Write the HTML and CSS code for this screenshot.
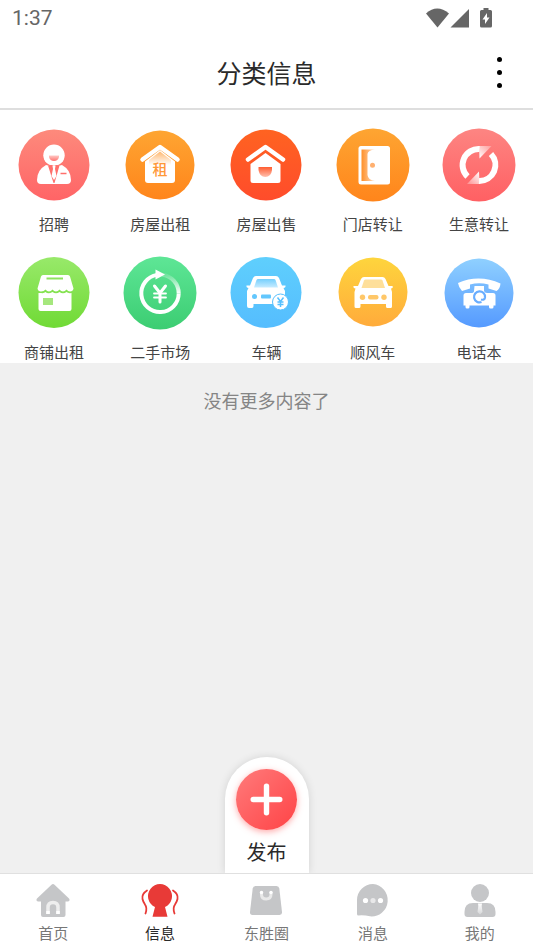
FILE: index.html
```html
<!DOCTYPE html>
<html lang="zh-CN">
<head>
<meta charset="utf-8">
<meta name="viewport" content="width=device-width, initial-scale=1">
<title>分类信息</title>
<link rel="stylesheet" href="styles.css">
</head>
<body>
<svg class="defs" aria-hidden="true">
  <defs>
    <linearGradient id="pink" x2="0" y2="1"><stop stop-color="#fd8a7c"/><stop offset="1" stop-color="#ff6466"/></linearGradient>
    <linearGradient id="rose" x2="0" y2="1"><stop stop-color="#fd8582"/><stop offset="1" stop-color="#ff6063"/></linearGradient>
    <linearGradient id="orange" x2="0" y2="1"><stop stop-color="#fea532"/><stop offset="1" stop-color="#ff851b"/></linearGradient>
    <linearGradient id="red" x2="0" y2="1"><stop stop-color="#ff6321"/><stop offset="1" stop-color="#ff4c2b"/></linearGradient>
    <linearGradient id="lime" x2="0" y2="1"><stop stop-color="#98e96a"/><stop offset="1" stop-color="#70da35"/></linearGradient>
    <linearGradient id="green" x2="0" y2="1"><stop stop-color="#5ee696"/><stop offset="1" stop-color="#3ccd72"/></linearGradient>
    <linearGradient id="sky" x2="0" y2="1"><stop stop-color="#5fcffd"/><stop offset="1" stop-color="#55bdfe"/></linearGradient>
    <linearGradient id="yellow" x2="0" y2="1"><stop stop-color="#fed53d"/><stop offset="1" stop-color="#ffab3b"/></linearGradient>
    <linearGradient id="blue" x2="0" y2="1"><stop stop-color="#8fd0ff"/><stop offset="1" stop-color="#559aff"/></linearGradient>
    <linearGradient id="door" x2="1" y2="0"><stop stop-color="#ff9028"/><stop offset="1" stop-color="#ffe0c8"/></linearGradient>
    <linearGradient id="mouth" x2="0" y2="1"><stop stop-color="#ff5c30"/><stop offset="1" stop-color="#ffc0ae"/></linearGradient>
    <linearGradient id="smile" x2="0" y2="1"><stop stop-color="#ffc9c5"/><stop offset="1" stop-color="#ff7370"/></linearGradient>
    <linearGradient id="attic" x2="0" y2="1"><stop stop-color="#ffb870"/><stop offset="1" stop-color="#fff"/></linearGradient>
    <linearGradient id="tipUp" x1="1" y1="0" x2="0" y2="1"><stop stop-color="#fff" stop-opacity=".25"/><stop offset="1" stop-color="#fff"/></linearGradient>
    <linearGradient id="tipDown" x1="0" y1="1" x2="1" y2="0"><stop stop-color="#fff" stop-opacity=".25"/><stop offset="1" stop-color="#fff"/></linearGradient>
    <linearGradient id="glass" x2="0" y2="1"><stop stop-color="#74cffd"/><stop offset="1" stop-color="#c8ecff"/></linearGradient>
    <linearGradient id="fade" x2="0" y2="1"><stop stop-color="#fff" stop-opacity=".15"/><stop offset="1" stop-color="#fff"/></linearGradient>
    <linearGradient id="tie" x2="0" y2="1"><stop stop-color="#fff"/><stop offset="1" stop-color="#fff" stop-opacity=".3"/></linearGradient>
  </defs>
</svg>

<header class="top">
  <div class="status">
    <span class="time">1:37</span>
    <svg class="signals" viewBox="0 0 66 20" aria-hidden="true">
      <path d="M0 5.500Q11-4.500 23 5.500L11.500 19.500Z"/>
      <path d="M43 1V19.500H24.500Z"/>
      <path fill-rule="evenodd" d="M57.500 0H62.500V2H64.500Q66 2 66 3.500V18Q66 19.500 64.500 19.500H55.500Q54 19.500 54 18V3.500Q54 2 55.500 2H57.500ZM61 5L56.500 11.500H59V16L63.500 9.500H61Z"/>
    </svg>
  </div>
  <div class="titlebar">
    <h1>分类信息</h1>
    <button class="more" type="button" aria-label="更多"><i></i><i></i><i></i></button>
  </div>
</header>

<nav class="categories" aria-label="分类">
  <a href="#"><svg viewBox="0 0 74 74" aria-hidden="true"><circle cx="37" cy="37" r="35.500" fill="url(#pink)"/><circle cx="37" cy="27.300" r="10.700" fill="#fff"/><path fill="url(#smile)" d="M32 27.500H42V29Q41 33 37 33T32 29Z"/><path fill="#fff" d="M29 37Q37 39.500 45 37Q54 42 54 52Q54 56 50 56H24Q20 56 20 52Q20 42 29 37Z"/><path fill="#ff706c" d="M31 37.500L34.500 37 37 38 39.500 37 42.500 37.500 37.500 55H36.500Z"/><path fill="#fff" d="M35.500 38H38.500L38 41 39.500 48 37 52 34.500 48 36 41Z"/><path stroke="#ff706c" stroke-width="1.500" d="M43.500 45.500H49.500"/></svg><span>招聘</span></a>
  <a href="#"><svg viewBox="0 0 74 74" aria-hidden="true"><circle cx="37" cy="37" r="34.500" fill="url(#orange)"/><path fill="#fff" d="M37 22L52 33.500V52Q52 55 49 55H25Q22 55 22 52V33.500Z"/><path fill="url(#attic)" d="M37 23.500L48 32V37H26V32Z"/><path class="line" stroke-width="4.500" d="M19.500 31.500L37 19 54.500 31.500"/><text class="rent" x="37" y="47">租</text></svg><span>房屋出租</span></a>
  <a href="#"><svg viewBox="0 0 74 74" aria-hidden="true"><circle cx="37" cy="37" r="35.500" fill="url(#red)"/><path fill="#fff" d="M36.500 25L51.500 36V52.500Q51.500 55 49 55H24Q21.500 55 21.500 52.500V36Z"/><path class="line" stroke-width="4.500" d="M19 31.500L36.500 19 54 31.500"/><path fill="url(#mouth)" d="M29.500 39H43V42Q42 49 36.300 49T29.500 42Z"/></svg><span>房屋出售</span></a>
  <a href="#"><svg viewBox="0 0 74 74" aria-hidden="true"><circle cx="37" cy="37" r="36.500" fill="url(#orange)"/><rect x="22.500" y="18" width="31.500" height="38.500" rx="2.500" fill="#fff"/><path fill="url(#door)" d="M25.500 21.500H39Q32 22 31.500 26V47Q32 52 39 53H25.500Z"/><circle cx="36.500" cy="37.300" r="2.500" fill="#ffb070"/></svg><span>门店转让</span></a>
  <a href="#"><svg viewBox="0 0 74 74" aria-hidden="true"><circle cx="37" cy="37" r="36.500" fill="url(#rose)"/><g fill="none" stroke="#fff" stroke-width="6"><path d="M25.500 48.500A16 16 0 0 1 37.500 21"/><path d="M49 26A16 16 0 0 1 37 53"/></g><path fill="url(#tipUp)" d="M37 18H49.500L37.500 30.500Z"/><path fill="url(#tipDown)" d="M37.500 56H25L37 43.500Z"/></svg><span>生意转让</span></a>
  <a href="#"><svg viewBox="0 0 74 74" aria-hidden="true"><circle cx="37" cy="36.500" r="35.500" fill="url(#lime)"/><path fill="#fff" d="M26 19H51Q52.500 19 53 20.500L56.500 32.500Q56 35.500 53 35.500 51 35.500 49.500 33.500 48 35.500 46 35.500 44 35.500 42.500 33.500 41 35.500 39 35.500 37 35.500 35.500 33.500 34 35.500 32 35.500 30 35.500 28.500 33.500 27 35.500 24 35.500 21 35.500 20.500 32.500L24 20.500Q24.500 19 26 19ZM21.500 37H24Q27 37.500 28.500 36 31 38.500 35.500 36 39 38.500 42.500 36 46 38.500 49.500 36 51 37.500 54.500 37V53Q54.500 55 52.500 55H23.500Q21.500 55 21.500 53Z"/><path stroke="#8de35c" stroke-width="2" d="M29.500 22.500H46"/><rect x="26" y="42" width="10" height="7" fill="#a5e77d"/></svg><span>商铺出租</span></a>
  <a href="#"><svg viewBox="0 0 74 74" aria-hidden="true"><circle cx="37" cy="37" r="36.500" fill="url(#green)"/><path fill="none" stroke="#fff" stroke-width="4" d="M55.700 37.500A18.700 18.700 0 1 1 34 18.900"/><path fill="none" stroke="url(#fade)" stroke-width="4" d="M39 18.700A18.700 18.700 0 0 1 55.700 37.500"/><path fill="#fff" d="M32.500 13.500L42 18.500 32.500 23.500Z"/><path class="line" stroke-width="3" d="M31.500 30L37 37 42.500 30M37 37V46"/><path class="line" stroke-width="1.800" d="M31 37.500H43M31 41.500H43"/></svg><span>二手市场</span></a>
  <a href="#"><svg viewBox="0 0 74 74" aria-hidden="true"><circle cx="37" cy="36.500" r="35.500" fill="url(#sky)"/><path fill="#fff" d="M27 20H47Q49 20 50 22L53 29.500H56.500Q57 31.500 54.500 32L56 35V50Q56 52 54 52H51Q49.500 52 49.500 50V48H24.500V50Q24.500 52 23 52H20Q18 52 18 50V35L19.500 32Q17 31.500 17.500 29.500H21L24 22Q25 20 27 20Z"/><path fill="url(#glass)" d="M29 23H45Q46 23 46.500 24L49 31.500H25L27.500 24Q28 23 29 23Z"/><circle cx="25.500" cy="40.500" r="2.500" fill="#63c7fd"/><rect x="32" y="38.500" width="10" height="4" rx="1" fill="#63c7fd"/><circle cx="51.500" cy="46" r="8" fill="#fff" stroke="#57c0fe"/><path fill="none" stroke="#57c0fe" stroke-width="1.500" d="M48.500 41.500L51.500 45.500 54.500 41.500M51.500 45.500V51M48.500 46H54.500M48.500 48.500H54.500"/></svg><span>车辆</span></a>
  <a href="#"><svg viewBox="0 0 74 74" aria-hidden="true"><circle cx="37" cy="36" r="34.500" fill="url(#yellow)"/><path fill="#fff" d="M28 21H46.500Q48.500 21 49.500 23L52.500 30H56.500Q57.500 32 55 32.500L56 36V50.500Q56 52 54.500 52H51.500Q50 52 50 50.500V48H24.500V50.500Q24.500 52 23 52H20Q18.500 52 18.500 50.500V36L19.500 32.500Q17 32 17.500 30H22L25 23Q26 21 28 21Z"/><path fill="#fedf9a" d="M29.500 23.500H45Q46 23.500 46.500 24.500L49 32H25.500L28 24.500Q28.500 23.500 29.500 23.500Z"/><g fill="#ffc768"><circle cx="26.500" cy="41.300" r="2.700"/><circle cx="48" cy="41.300" r="2.700"/><rect x="32" y="39" width="10.500" height="4.500" rx="2"/></g></svg><span>顺风车</span></a>
  <a href="#"><svg viewBox="0 0 74 74" aria-hidden="true"><circle cx="37" cy="37" r="34.500" fill="url(#blue)"/><path fill="#fff" d="M16 27Q37 18 58.500 27.500 58 33 54.500 35L46.500 32.500V28.500Q37 26 28 28.500V32.500L20 35Q16.500 31 16 27ZM32.500 30H42V35Q42.500 37 45 37H51Q53.500 37 53.500 39.500V49.500H51.500V51Q51.500 52.500 50 52.500H48.500Q47 52.500 47 51V49.500H27.500V51Q27.500 52.500 26 52.500H25Q23.500 52.500 23.500 51V49.500H21.500V39.500Q21.500 37 24 37H29Q32 37 32 35Z"/><path fill="none" stroke="#68adff" stroke-width="2.200" d="M39.500 46A5.500 5.500 0 1 1 43 41.500Q42.500 44.500 39 43.500"/></svg><span>电话本</span></a>
</nav>

<main class="content">
  <p class="empty">没有更多内容了</p>
  <button class="publish" type="button">
    <span class="plus"><svg viewBox="0 0 62 62" aria-hidden="true"><path class="line" stroke-width="5.500" d="M31 17.500V44.500M17.500 31H44.500"/></svg></span>
    <span>发布</span>
  </button>
</main>

<nav class="tabs" aria-label="主导航">
  <a href="#"><svg viewBox="-3 0 40 34" aria-hidden="true"><path d="M15.500.7Q17-.5 18.500.7L33 14.500Q34.500 17 32 17.500H29.500V31Q29.500 33 27.500 33H7Q5 33 5 31V17.500H2Q-.5 17 1 14.500Z"/><path fill="none" stroke="#eee" stroke-width="3.500" d="M12 30V23.500Q12 18.500 17 18.500T22 23.500V30"/><path stroke="#fff" stroke-width="3.500" d="M12 30V27M22 30V27"/></svg><span>首页</span></a>
  <a href="#" class="active" aria-current="page"><svg viewBox="-3 0 40 34" aria-hidden="true"><path d="M12 23A12 12 0 1 1 22 23L24.500 32.700H9.500Z"/><path fill="none" stroke="#e83a37" stroke-width="1.800" stroke-linecap="round" d="M4 6.500Q-1.500 10-.5 15 0 17.500 2 20.500 4.500 24 2.500 29.500M30 6.500Q35.500 10 34.500 15 34 17.500 32 20.500 29.500 24 31.500 29.500"/></svg><span>信息</span></a>
  <a href="#"><svg viewBox="-3 0 40 34" aria-hidden="true"><path d="M6.500 2H27.500Q30 2 30.300 4.500L33 28Q33.300 31 30.500 31H3.500Q.7 31 1 28L3.700 4.500Q4 2 6.500 2Z"/><path fill="none" stroke="#e9e9e9" stroke-width="3" stroke-linecap="round" d="M12.500 8.500V10.500Q12.500 15 17.200 15T22 10.500V8.500"/><g fill="#fff"><circle cx="12.500" cy="8.500" r="1.700"/><circle cx="22" cy="8.500" r="1.700"/></g></svg><span>东胜圈</span></a>
  <a href="#"><svg viewBox="-3 0 40 34" aria-hidden="true"><path d="M17 0A16.200 16.200 0 1 1 14 32.300Q8 31 2.500 31.500 1 31.500 1 30V16A16 16 0 0 1 17 0Z"/><g fill="#fff"><circle cx="9.500" cy="16.500" r="2.600"/><circle cx="17" cy="16.500" r="2.600" opacity=".6"/><circle cx="24.500" cy="16.500" r="2.600"/></g></svg><span>消息</span></a>
  <a href="#"><svg viewBox="-3 0 40 34" aria-hidden="true"><circle cx="17" cy="9" r="9"/><path d="M10 19H24Q32.500 19 32.500 28V30Q32.500 33 29.500 33H4.500Q1.500 33 1.500 30V28Q1.500 19 10 19Z"/><path fill="url(#tie)" d="M15 19.500H19L18.700 22 19.500 28 17 30.500 14.500 28 15.300 22Z"/></svg><span>我的</span></a>
</nav>
</body>
</html>
```
FILE: styles.css
```css
* {
  box-sizing: border-box;
}

body {
  display: flex;
  flex-direction: column;
  min-height: 100vh;
  margin: 0;
  background: #fff;
  color: #444;
  font-family: "Noto Sans CJK SC", sans-serif;
  font-size: 15px;
  font-weight: 400;
  line-height: 20px;
}

a {
  color: inherit;
  text-decoration: none;
}

button {
  padding: 0;
  border: 0;
  background: none;
  color: inherit;
  font: inherit;
}

.defs {
  position: absolute;
  width: 0;
  height: 0;
}

.line {
  fill: none;
  stroke: #fff;
  stroke-linecap: round;
  stroke-linejoin: round;
}

.top {
  border-bottom: 2px solid #dedede;
}

.status {
  display: flex;
  align-items: center;
  justify-content: space-between;
  height: 36px;
  padding: 0 41px 0 12px;
  color: #666;
}

.time {
  font-family: Roboto, sans-serif;
  font-size: 21px;
  font-weight: 400;
}

.signals {
  width: 66px;
  height: 20px;
  fill: #666;
}

.titlebar {
  display: grid;
  grid-template-columns: 1fr auto 1fr;
  align-items: center;
  height: 72px;
  padding: 0 24px;
}

.titlebar h1 {
  grid-column: 2;
  margin: 0;
  color: #2a2a2a;
  font-size: 25px;
  font-weight: 400;
  line-height: 36px;
}

.more {
  display: flex;
  flex-direction: column;
  align-items: center;
  justify-self: end;
  gap: 8px;
  width: 20px;
}

.more i {
  width: 5px;
  height: 5px;
  border-radius: 50%;
  background: #000;
}

.categories {
  display: grid;
  grid-template-columns: repeat(5, 1fr);
  row-gap: 22px;
  padding: 18px 1px 1px;
}

.categories a {
  display: flex;
  flex-direction: column;
  align-items: center;
  gap: 12px;
}

.categories svg {
  width: 74px;
  height: 74px;
}

.rent {
  fill: #ff9838;
  font-size: 15px;
  font-weight: 500;
  text-anchor: middle;
}

.content {
  display: flex;
  flex: 1;
  flex-direction: column;
  align-items: center;
  justify-content: space-between;
  background: #f0f0f0;
}

.empty {
  margin: 27px 0;
  color: #858585;
  font-size: 18px;
}

.publish {
  display: flex;
  flex-direction: column;
  align-items: center;
  gap: 12px;
  width: 84px;
  padding: 12px 0 11px;
  border-radius: 42px 42px 0 0;
  background: #fff;
  box-shadow: 0 0 8px #0000001f;
  color: #2a2a2a;
  font-size: 20px;
}

.plus {
  width: 61px;
  height: 61px;
  border-radius: 50%;
  background: linear-gradient(135deg, #ff7b7b, #ff4346);
  box-shadow: 0 2px 6px #ff5a5a80;
}

.plus svg {
  display: block;
}

.tabs {
  position: relative;
  display: grid;
  grid-template-columns: repeat(5, 1fr);
  padding: 10px 0 5px;
  border-top: 1px solid #e0e0e0;
  background: #fff;
  color: #777;
}

.tabs a {
  display: flex;
  flex-direction: column;
  align-items: center;
  gap: 5px;
}

.tabs svg {
  width: 40px;
  height: 34px;
  fill: #c5c6c8;
}

.tabs .active {
  color: #2a2a2a;
}

.tabs .active svg {
  fill: #e83a37;
}
```
